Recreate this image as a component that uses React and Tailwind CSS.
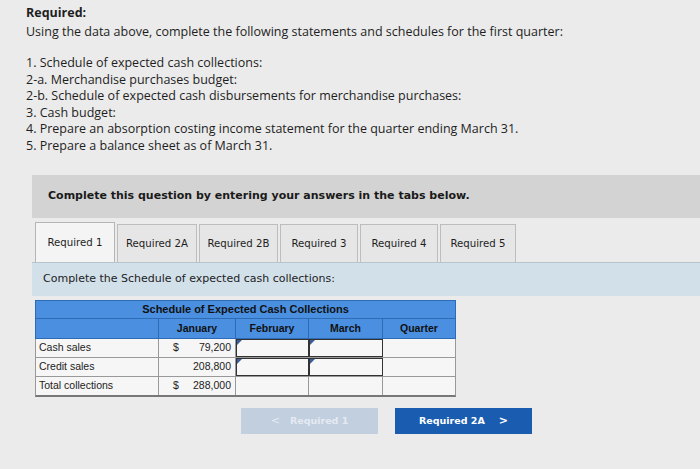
import React from "react";

const tabs = ["Required 1", "Required 2A", "Required 2B", "Required 3", "Required 4", "Required 5"];
const tabW = [80, 80, 79, 78, 78, 76];

function InputCell({ w }) {
  return (
    <div className="relative h-full border-[1.5px] border-[#333] bg-[#f7f7f7]" style={{ width: w }}>
      <div className="absolute left-0 top-0 w-0 h-0 border-t-[5px] border-r-[5px] border-t-[#3a5f9a] border-r-transparent" />
    </div>
  );
}

export default function App() {
  const sans = { fontFamily: '"Open Sans", "Liberation Sans", sans-serif' };
  const verd = { fontFamily: '"DejaVu Sans", Verdana, sans-serif' };
  const arial = { fontFamily: '"Liberation Sans", Arial, sans-serif' };
  return (
    <div className="w-[700px] h-[469px] overflow-hidden bg-[#ebebeb] text-[#1e1e1e]">
      <div className="pl-[26px] pt-[5px] text-[12.5px] leading-[16.5px]" style={sans}>
        <div className="font-bold">Required:</div>
        <div className="mt-[2px]">Using the data above, complete the following statements and schedules for the first quarter:</div>
        <div className="mt-[15px]">
          <div>1. Schedule of expected cash collections:</div>
          <div>2-a. Merchandise purchases budget:</div>
          <div>2-b. Schedule of expected cash disbursements for merchandise purchases:</div>
          <div>3. Cash budget:</div>
          <div>4. Prepare an absorption costing income statement for the quarter ending March 31.</div>
          <div>5. Prepare a balance sheet as of March 31.</div>
        </div>
      </div>

      <div className="ml-[32px] mt-[21px] h-[43px] bg-[#d3d3d3] flex items-center pl-[16px]" style={verd}>
        <span className="text-[11px] font-bold text-[#1a1a1a]">Complete this question by entering your answers in the tabs below.</span>
      </div>

      <div className="ml-[35px] mt-[4px] flex items-end h-[40px]" style={verd}>
        {tabs.map((t, i) => (
          <div
            key={t}
            className={
              i === 0
                ? "h-[40px] border border-[#b5b5b5] border-b-0 bg-[#f4f4f4] flex items-center justify-center text-[10.2px] mr-[2px]"
                : "h-[38px] border border-[#bdbdbd] border-b-0 bg-[#e6e6e6] flex items-center justify-center text-[10.2px] mr-[2px]"
            }
            style={{ width: tabW[i] }}
          >
            {t}
          </div>
        ))}
      </div>

      <div className="ml-[32px] h-[34px] bg-[#d2e0ea] flex items-center pl-[11px] border-t border-[#b8c4cc]" style={verd}>
        <span className="text-[11px] text-[#222]">Complete the Schedule of expected cash collections:</span>
      </div>

      <div className="ml-[35px] mt-[4px] w-[421px] text-[10.5px]" style={arial}>
        <div className="flex h-[19px] bg-[#4a8fe0] border border-[#2d6cb5] items-center justify-center font-bold text-[11px] text-[#111]">
          Schedule of Expected Cash Collections
        </div>
        <div className="flex h-[20px] bg-[#4a8fe0] border border-t-0 border-[#2d6cb5] font-bold text-[#111] text-[10.5px]">
          <div className="w-[123px] border-r border-[#2d6cb5]" />
          <div className="w-[77px] flex items-center justify-center border-r border-[#2d6cb5]">January</div>
          <div className="w-[73px] flex items-center justify-center border-r border-[#2d6cb5]">February</div>
          <div className="w-[74px] flex items-center justify-center border-r border-[#2d6cb5]">March</div>
          <div className="flex-1 flex items-center justify-center">Quarter</div>
        </div>
        {[
          { l: "Cash sales", d: true, v: "79,200", inp: true },
          { l: "Credit sales", d: false, v: "208,800", inp: true },
          { l: "Total collections", d: true, v: "288,000", inp: false },
        ].map((r, i) => (
          <div
            key={r.l}
            className={`flex bg-[#f6f6f6] border-x border-b border-[#999] text-[#222] ${i === 2 ? "h-[20px] border-b-[2px] border-b-[#777]" : "h-[19px]"}`}
          >
            <div className="w-[123px] flex items-center pl-[3px] border-r border-[#999]">{r.l}</div>
            <div className="w-[77px] flex items-center justify-between px-[4px] border-r border-[#999]">
              <span className="pl-[10px]">{r.d ? "$" : ""}</span>
              <span>{r.v}</span>
            </div>
            {r.inp ? (
              <>
                <InputCell w={73} />
                <InputCell w={74} />
              </>
            ) : (
              <>
                <div className="w-[73px] border-r border-[#999]" />
                <div className="w-[74px] border-r border-[#999]" />
              </>
            )}
            <div className="flex-1" />
          </div>
        ))}
      </div>

      <div className="flex ml-[241px] mt-[11px] gap-[17px]" style={verd}>
        <div className="w-[137px] h-[26px] bg-[#c2cfdf] flex items-center justify-center text-[9.5px] font-bold text-[#e4eaf2]">
          <span className="mr-[10px] text-[11px] font-normal">&lt;</span>Required 1
        </div>
        <div className="w-[137px] h-[26px] bg-[#1a5db0] flex items-center justify-center text-[9.5px] font-bold text-white">
          Required 2A<span className="ml-[14px] text-[11px]">&gt;</span>
        </div>
      </div>
    </div>
  );
}
